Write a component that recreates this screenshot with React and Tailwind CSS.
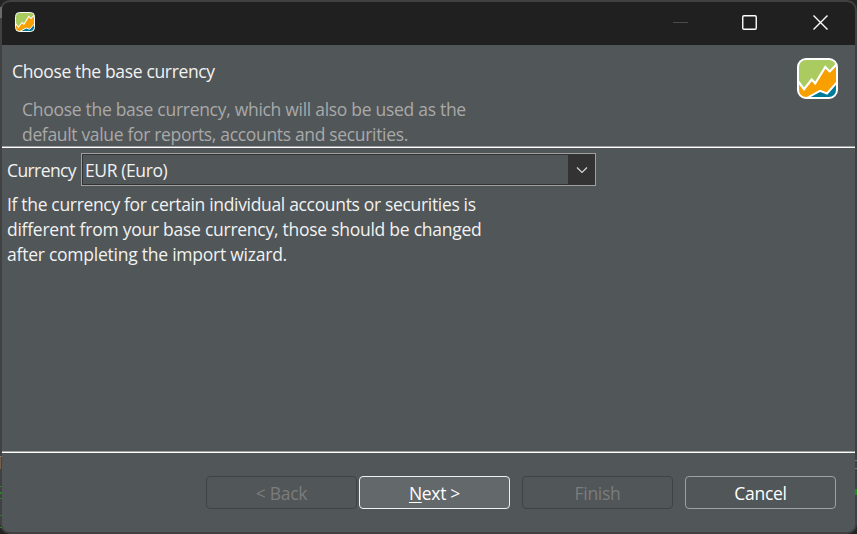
function LogoIcon({ size }) {
  return (
    <svg width={size} height={size} viewBox="0 0 41 41" className="block shrink-0">
      <defs>
        <clipPath id={`tile-${size}`}>
          <rect x="1.5" y="1.5" width="38" height="38" rx="7.5" />
        </clipPath>
      </defs>
      <g clipPath={`url(#tile-${size})`}>
        <rect width="41" height="41" fill="#aacb5f" />
        <path d="M-1 20.5 L7 31.2 L14.7 21.5 L18.2 25.5 L28.3 9 L32.7 13.5 L42 4 V42 H-1 Z" fill="#f7a000" stroke="#fff" strokeWidth="2.2" />
        <path d="M8 41 L23 32.8 L30 35.5 L42 22 V44 H8 Z" fill="#007a99" stroke="#fff" strokeWidth="2" />
      </g>
      <rect x="1" y="1" width="39" height="39" rx="8" fill="none" stroke="#fff" strokeWidth="2" />
    </svg>
  );
}

function TitleBar() {
  return (
    <div className="flex h-[43px] shrink-0 items-start bg-[#202020]">
      <div className="pt-[10px] pl-[13px]">
        <LogoIcon size={20} />
      </div>
      <svg className="ml-auto block overflow-visible" width="180" height="43" fill="none">
        <path d="M-2 20.5H13" stroke="#4b4b4b" />
        <rect x="67.75" y="13.75" width="13.5" height="13.5" rx="1.2" stroke="#fff" strokeWidth="1.4" />
        <path d="M138.5 13.5L152.5 27.5M152.5 13.5L138.5 27.5" stroke="#fff" strokeWidth="1.4" />
      </svg>
    </div>
  );
}

function Rule() {
  return <div className="h-[2px] shrink-0 border-t border-[#a0a0a0] bg-white" />;
}

function Button({ children, className }) {
  return (
    <button className={`h-[33px] w-[151px] rounded-[4px] border pt-[2px] leading-[25px] tracking-[-0.3px] ${className}`}>
      {children}
    </button>
  );
}

/* Slivers of the editor window that show past the dialog's edges. */
function BackdropEdges() {
  return (
    <>
      <div className="absolute top-[7px] left-0 h-[11px] w-[2px] bg-[#6b6b6b]" />
      <div className="absolute top-[456px] left-0 h-px w-[2px] bg-[#777777]" />
      <div className="absolute top-[457px] left-0 h-[12px] w-px bg-[#7a5f48]" />
      <div className="absolute top-[486px] left-0 h-px w-[2px] bg-[#1f8a1f]" />
      <div className="absolute top-[492px] left-0 h-[2px] w-[2px] bg-[#1f8a1f]" />
      <div className="absolute top-[498px] left-0 h-px w-[2px] bg-[#1f8a1f]" />
      <div className="absolute top-[515px] left-0 h-px w-[2px] bg-[#1f8a1f]" />
      <div className="absolute top-[527px] left-0 h-px w-[2px] bg-[#1f8a1f]" />
      <div className="absolute top-[460px] right-0 h-px w-[2px] bg-[#777777]" />
      <div className="absolute top-[468px] right-0 h-px w-[2px] bg-[#777777]" />
      <div className="absolute top-[489px] right-0 h-[6px] w-[2px] bg-[#1f8a1f]" />
    </>
  );
}

export default function App() {
  return (
    <div className="relative h-[534px] w-[857px] overflow-hidden bg-[#242424] font-['Open_Sans',sans-serif] text-[17.5px] leading-[25px] whitespace-nowrap text-[#f2f2f2]">
      <div className="flex h-full flex-col overflow-hidden rounded-[10px] border-2 border-[#414141] bg-[#515658]">
        <TitleBar />
        <div className="flex h-[101px] shrink-0 justify-between">
          <div className="pt-[14px] pl-[10px]">
            <h1 className="tracking-[-0.35px]">Choose the base currency</h1>
            <div className="pt-[13px] pl-[10px] text-[#a9a9a9]">
              <p className="tracking-[-0.29px]">Choose the base currency, which will also be used as the</p>
              <p className="tracking-[-0.33px]">default value for reports, accounts and securities.</p>
            </div>
          </div>
          <div className="pt-[13px] pr-[17px]">
            <LogoIcon size={41} />
          </div>
        </div>
        <Rule />
        <div className="h-[303px] shrink-0 pt-[5px] pl-[5px]">
          <div className="flex">
            <label className="w-[74px] pt-[5px] tracking-[-0.6px]">Currency</label>
            <div className="h-[33px] w-[515px] border border-[#a0a0a0]">
              <div className="flex h-full justify-between border border-[#333333]">
                <span className="pt-[3px] pl-[2px] tracking-[-0.4px]">EUR (Euro)</span>
                <div className="flex w-[26px] items-center justify-center bg-[#333333]">
                  <svg width="12" height="8" fill="none" className="overflow-visible">
                    <path d="M2 1.5L7 6.5L12 1.5" stroke="#d8d8d8" strokeWidth="1.2" />
                  </svg>
                </div>
              </div>
            </div>
          </div>
          <div className="pt-[6px]">
            <p className="tracking-[-0.33px]">If the currency for certain individual accounts or securities is</p>
            <p className="tracking-[-0.26px]">different from your base currency, those should be changed</p>
            <p className="tracking-[-0.24px]">after completing the import wizard.</p>
          </div>
        </div>
        <Rule />
        <div className="flex justify-end pt-[23px] pr-[19px]">
          <Button className="mr-[2px] border-[#404344] text-[#7c7c7c]">&lt; Back</Button>
          <Button className="mr-3 border-[#f0f0f0] bg-[#63686b] text-white">
            <span className="underline underline-offset-2">N</span>ext &gt;
          </Button>
          <Button className="mr-3 border-[#404344] text-[#7c7c7c]">Finish</Button>
          <Button className="border-[#a0a0a0] text-white">Cancel</Button>
        </div>
      </div>
      <BackdropEdges />
    </div>
  );
}
